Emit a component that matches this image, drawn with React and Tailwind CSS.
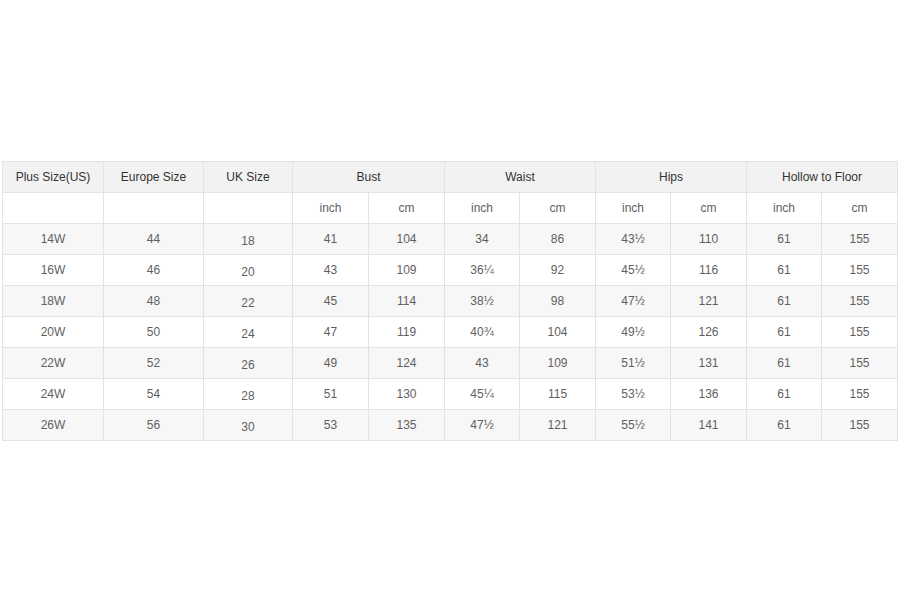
const rows = [
  ["14W", "44", "18", "41", "104", "34", "86", "43½", "110", "61", "155"],
  ["16W", "46", "20", "43", "109", "36¼", "92", "45½", "116", "61", "155"],
  ["18W", "48", "22", "45", "114", "38½", "98", "47½", "121", "61", "155"],
  ["20W", "50", "24", "47", "119", "40¾", "104", "49½", "126", "61", "155"],
  ["22W", "52", "26", "49", "124", "43", "109", "51½", "131", "61", "155"],
  ["24W", "54", "28", "51", "130", "45¼", "115", "53½", "136", "61", "155"],
  ["26W", "56", "30", "53", "135", "47½", "121", "55½", "141", "61", "155"],
];

const widths = [101, 100, 89, 76, 76, 75, 76, 75, 76, 75, 76];

export default function App() {
  const cell = "border border-[#e3e3e3] h-[31px] p-0 text-center align-middle";

  return (
    <div className="w-[900px] h-[600px] bg-white pt-[161px] pl-[2px] font-['Liberation_Sans',Arial,sans-serif] text-[12px]">
      <table className="table-fixed border-collapse w-[895px]">
        <colgroup>
          {widths.map((w, i) => (
            <col key={i} style={{ width: w }} />
          ))}
        </colgroup>
        <thead>
          <tr className="bg-[#f2f2f2] text-[#333]">
            <th className={`${cell} font-normal`}>Plus Size(US)</th>
            <th className={`${cell} font-normal`}>Europe Size</th>
            <th className={`${cell} font-normal`}>UK Size</th>
            <th colSpan={2} className={`${cell} font-normal`}>Bust</th>
            <th colSpan={2} className={`${cell} font-normal`}>Waist</th>
            <th colSpan={2} className={`${cell} font-normal`}>Hips</th>
            <th colSpan={2} className={`${cell} font-normal`}>Hollow to Floor</th>
          </tr>
        </thead>
        <tbody className="text-[#5f5f5f]">
          <tr className="bg-white">
            <td className={cell}></td>
            <td className={cell}></td>
            <td className={cell}></td>
            {["inch", "cm", "inch", "cm", "inch", "cm", "inch", "cm"].map((u, i) => (
              <td key={i} className={cell}>{u}</td>
            ))}
          </tr>
          {rows.map((r, i) => (
            <tr key={r[0]} className={i % 2 === 0 ? "bg-[#f7f7f7]" : "bg-white"}>
              {r.map((v, j) => (
                <td key={j} className={`${cell} ${j === 2 ? "pt-[3px]" : ""}`}>{v}</td>
              ))}
            </tr>
          ))}
        </tbody>
      </table>
    </div>
  );
}
